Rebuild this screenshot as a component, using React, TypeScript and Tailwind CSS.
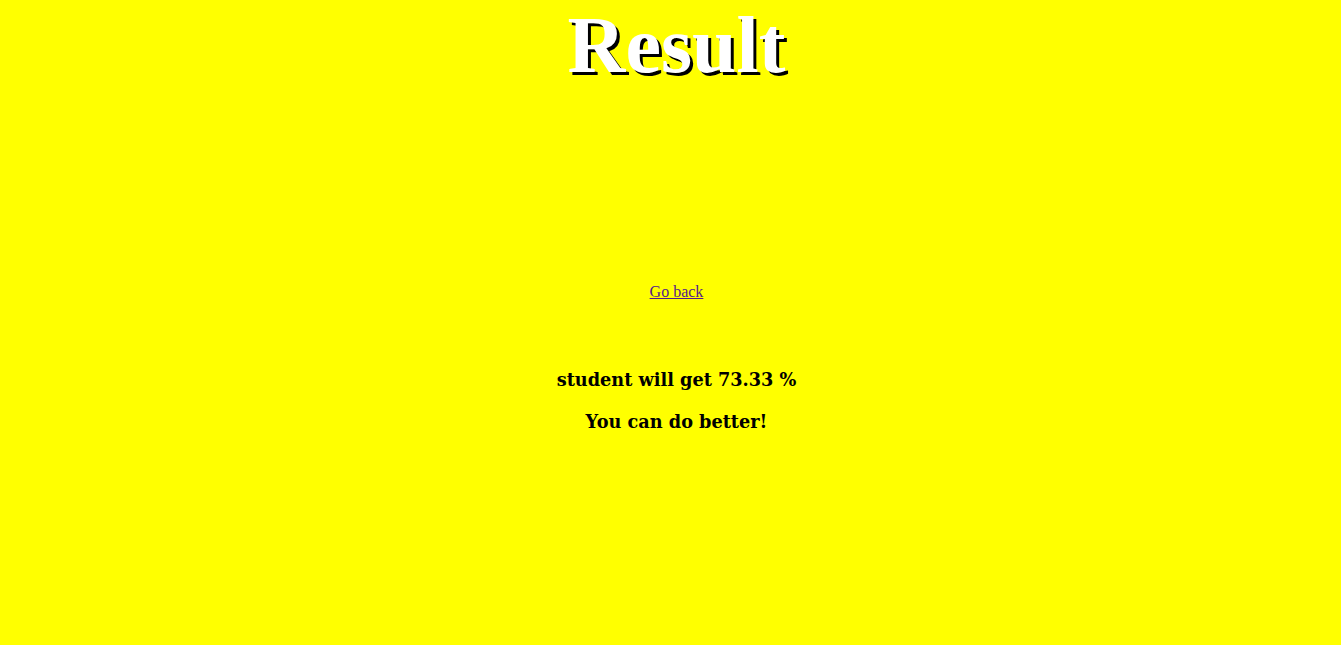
import React from "react";

export default function App() {
  const percent = 73.33;

  return (
    <div className="flex min-h-[645px] w-full flex-col bg-[#ffff00] pl-[12px] text-center font-['Liberation_Serif',serif]">
      <h1 className="text-[80px] font-bold leading-[normal] text-white [text-shadow:3px_3px_0_#000]">
        Result
      </h1>
      <div className="mt-[192px] text-[16px] leading-[normal]">
        <a href="#" className="text-[#551a8b] underline">
          Go back
        </a>
      </div>
      <div className="mt-[68px] flex flex-col gap-[21px] font-['Georgia','DejaVu_Serif',serif] text-[17.7px] font-bold leading-[normal] text-black">
        <h3>student will get {percent.toFixed(2)} %</h3>
        <h3>You can do better!</h3>
      </div>
    </div>
  );
}
